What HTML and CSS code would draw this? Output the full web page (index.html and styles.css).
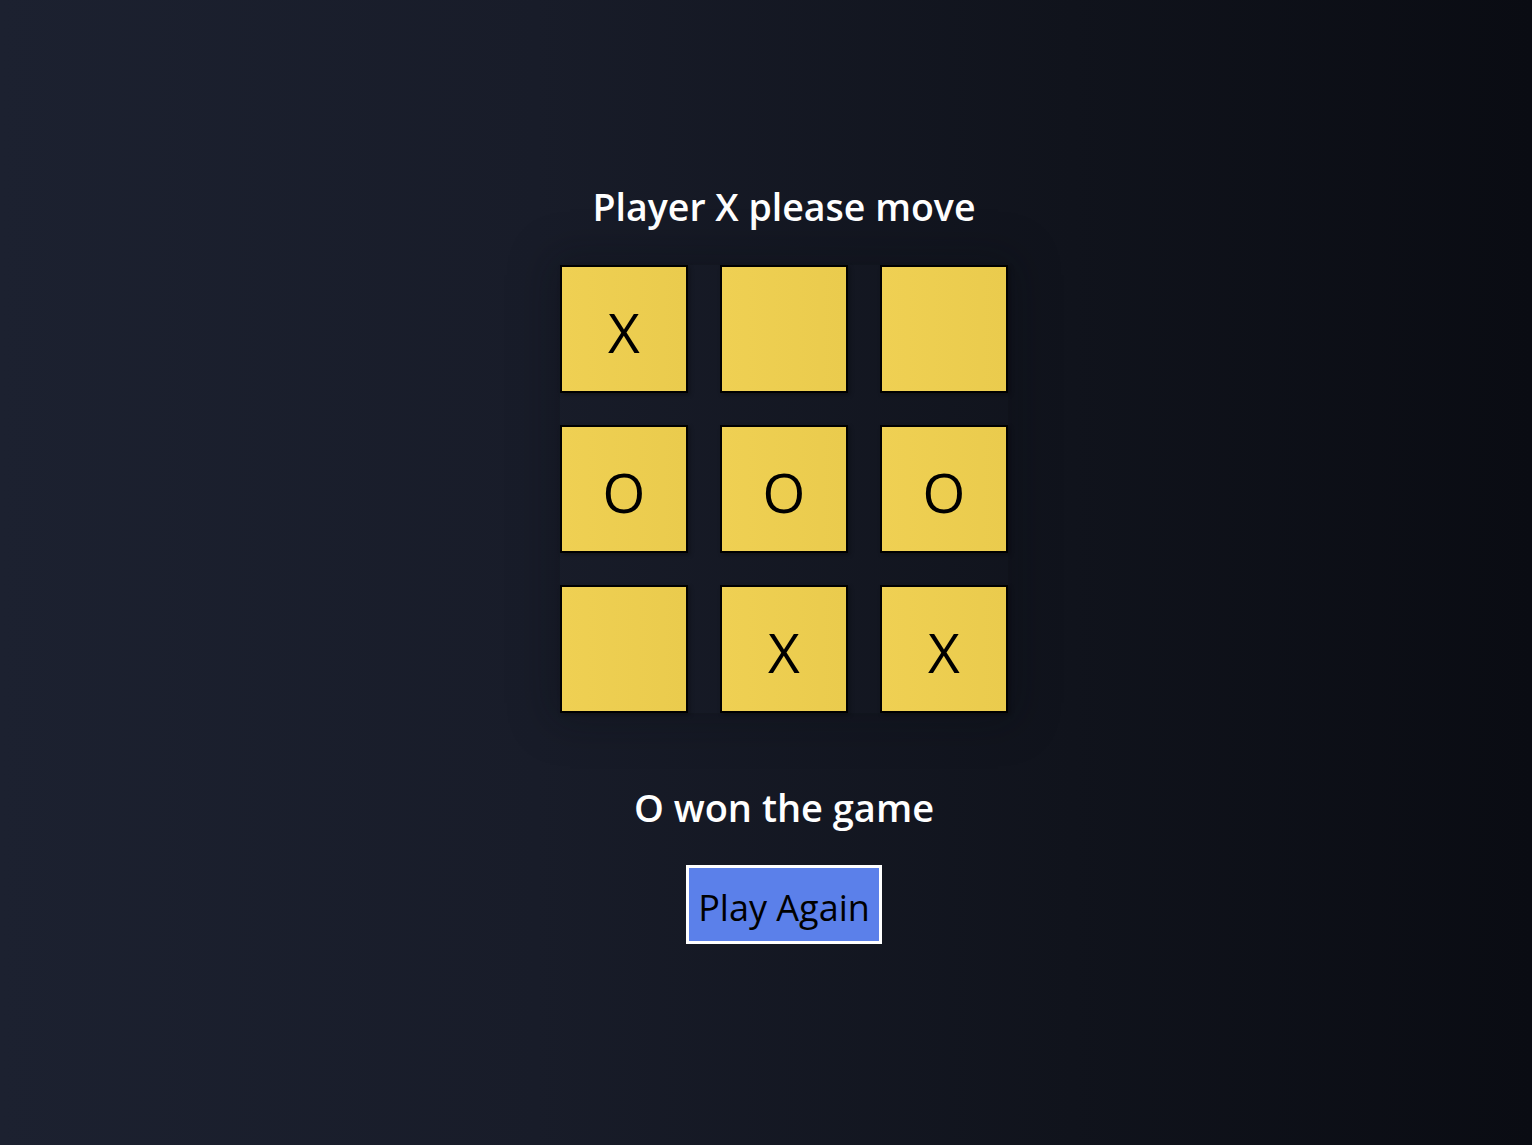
FILE: index.html
```html
<!DOCTYPE html>
<html lang="en">
<head>
<meta charset="utf-8">
<title>Tic Tac Toe</title>
<link rel="stylesheet" href="styles.css">
</head>
<body>
<main class="game">
  <h1 class="turn">Player X please move</h1>
  <div class="board">
    <div class="cell">X</div>
    <div class="cell"></div>
    <div class="cell"></div>
    <div class="cell">O</div>
    <div class="cell">O</div>
    <div class="cell">O</div>
    <div class="cell"></div>
    <div class="cell">X</div>
    <div class="cell">X</div>
  </div>
  <h2 class="result">O won the game</h2>
  <button class="again">Play Again</button>
</main>
</body>
</html>
```

FILE: styles.css
```css
html, body {
  margin: 0;
  height: 100%;
}
body {
  background: linear-gradient(to right, #1c2130 0%, #181c29 35%, #10131c 70%, #0a0c13 100%);
  font-family: "Open Sans", "Noto Sans", sans-serif;
  color: #ffffff;
}
.game {
  display: flex;
  flex-direction: column;
  align-items: center;
  padding-top: 180px;
  padding-left: 36px;
}
.turn {
  margin: 0;
  font-size: 37.5px;
  font-weight: 600;
  line-height: 54px;
}
.board {
  margin-top: 31px;
  display: grid;
  grid-template-columns: repeat(3, 128px);
  grid-auto-rows: 128px;
  gap: 32px;
  box-shadow: 0 0 40px 10px rgba(8, 10, 16, 0.25);
}
.cell {
  box-sizing: border-box;
  border: 2px solid #000;
  background: linear-gradient(to right, #efd053, #eacb4d);
  color: #000;
  font-size: 55px;
  font-weight: 400;
  display: flex;
  align-items: center;
  justify-content: center;
  padding-top: 4px;
  box-shadow: 2px 2px 4px rgba(0, 0, 0, 0.3);
}
.result {
  margin: 67px 0 0;
  font-size: 38px;
  font-weight: 600;
  line-height: 54px;
}
.again {
  margin-top: 31px;
  box-sizing: border-box;
  width: 196px;
  height: 79px;
  border: 3px solid #ffffff;
  background: #5b80ea;
  color: #000;
  font-family: "Open Sans", "Noto Sans", sans-serif;
  font-size: 36px;
  padding: 5px 0 0;
}
```
